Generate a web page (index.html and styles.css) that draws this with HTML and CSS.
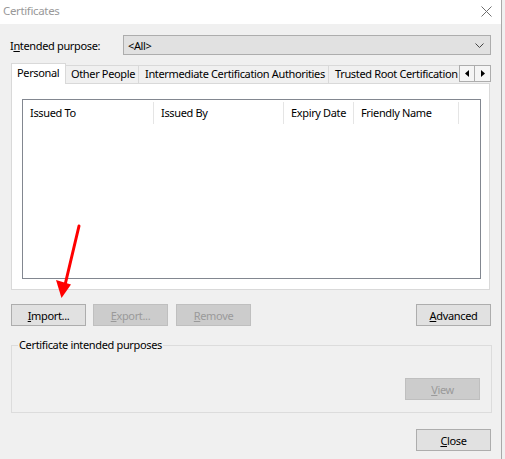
FILE: index.html
```html
<!DOCTYPE html>
<html>
<head>
<meta charset="utf-8">
<link rel="stylesheet" href="styles.css">
</head>
<body>
<div class="window">
  <div class="titlebar">
    <span class="title">Certificates</span>
    <svg class="close-x" width="11" height="11" viewBox="0 0 11 11"><path d="M0.5 0.5 L10.5 10.5 M10.5 0.5 L0.5 10.5" stroke="#6e6e6e" stroke-width="1" fill="none"/></svg>
  </div>
  <div class="content">
    <div class="purpose-row">
      <span class="purpose-label">I<u>n</u>tended purpose:</span>
      <div class="combo">
        <span class="combo-text">&lt;All&gt;</span>
        <svg class="combo-chev" width="9" height="5" viewBox="0 0 9 5"><path d="M0.5 0.5 L4.5 4.5 L8.5 0.5" stroke="#444" stroke-width="1" fill="none"/></svg>
      </div>
    </div>
    <div class="tabs">
      <div class="tab selected">Personal</div>
      <div class="tab t2">Other People</div>
      <div class="tab t3">Intermediate Certification Authorities</div>
      <div class="tab t4">Trusted Root Certification Authorities</div>
      <div class="tab-scroll">
        <div class="scroll-btn"><svg width="4" height="7" viewBox="0 0 4 7"><path d="M4 0 L0 3.5 L4 7 Z" fill="#000"/></svg></div>
        <div class="scroll-btn"><svg width="4" height="7" viewBox="0 0 4 7"><path d="M0 0 L4 3.5 L0 7 Z" fill="#000"/></svg></div>
      </div>
    </div>
    <div class="panel">
      <div class="listview">
        <div class="lv-header">
          <div class="col c1">Issued To</div>
          <div class="col c2">Issued By</div>
          <div class="col c3">Expiry Date</div>
          <div class="col c4">Friendly Name</div>
        </div>
      </div>
    </div>
    <div class="btn-row">
      <div class="btn-left">
        <div class="btn"><u>I</u>mport...</div>
        <div class="btn disabled"><u>E</u>xport...</div>
        <div class="btn disabled"><u>R</u>emove</div>
      </div>
      <div class="btn"><u>A</u>dvanced</div>
    </div>
    <fieldset class="group">
      <legend>Certificate intended purposes</legend>
      <div class="group-body">
        <div class="btn disabled"><u>V</u>iew</div>
      </div>
    </fieldset>
    <div class="footer">
      <div class="btn"><u>C</u>lose</div>
    </div>
  </div>
  <svg class="annot-arrow" width="100" height="100" viewBox="0 0 100 100">
    <line x1="79" y1="7" x2="65" y2="66" stroke="#ff0000" stroke-width="3" stroke-linecap="round"/>
    <polygon points="56,61 71,65.5 61.5,79" fill="#ff0000"/>
  </svg>
</div>
</body>
</html>
```
FILE: styles.css
```css
* { box-sizing: border-box; }
html, body {
  margin: 0;
  padding: 0;
  background: #f0f0f0;
  font-family: "Noto Sans", "Segoe UI", sans-serif;
  font-size: 11px;
  letter-spacing: -0.35px;
  color: #000;
}
.window {
  position: relative;
  width: 502px;
  height: 459px;
  background: #f0f0f0;
  border-right: 1px solid #a9a9a9;
}
.titlebar {
  height: 24px;
  background: #fff;
  display: flex;
  align-items: center;
  justify-content: space-between;
  padding: 0 9px 0 3px;
}
.title {
  color: #999;
  font-size: 11.5px;
  line-height: 1;
  margin-top: -2px;
}
.close-x { margin-top: -2px; }
.content {
  padding: 11px 10px 0 11px;
}
.purpose-row {
  display: flex;
  align-items: center;
  height: 20px;
}
.purpose-label {
  width: 113px;
  margin-left: -1px;
}
.combo {
  flex: 1;
  height: 20px;
  background: #e1e1e1;
  border: 1px solid #adadad;
  display: flex;
  align-items: center;
  justify-content: space-between;
  padding: 0 6px 0 4px;
}
.combo-chev { margin-top: 1px; }
.tabs {
  margin-top: 8px;
  height: 20px;
  display: flex;
  align-items: flex-end;
  position: relative;
  z-index: 1;
}
.tab {
  height: 18px;
  line-height: 16px;
  border-top: 1px solid #d9d9d9;
  border-right: 1px solid #d9d9d9;
  background: #f0f0f0;
  white-space: nowrap;
  overflow: hidden;
  padding-left: 5px;
  flex: none;
}
.tab.selected {
  height: 21px;
  margin-bottom: -1px;
  background: #fff;
  border-left: 1px solid #d9d9d9;
  width: 55px;
  padding-left: 5px;
  line-height: 17px;
}
.t2 { width: 73px; }
.t3 { width: 190px; padding-left: 6px; }
.t4 { width: 130px; border-right: none; padding-left: 6px; }
.tab-scroll {
  display: flex;
  height: 17px;
  margin-bottom: 1px;
  align-self: flex-end;
}
.scroll-btn {
  width: 16px;
  height: 17px;
  border: 1px solid #adadad;
  background: #f5f5f5;
  display: flex;
  align-items: center;
  justify-content: center;
}
.scroll-btn + .scroll-btn { border-left: none; }
.panel {
  width: 479px;
  height: 207px;
  background: #fff;
  border: 1px solid #d9d9d9;
  padding: 15px 0 0 10px;
}
.listview {
  width: 459px;
  height: 180px;
  border: 1px solid #828790;
  background: #fff;
}
.lv-header {
  display: flex;
  height: 24px;
  padding-top: 2px;
}
.col {
  border-right: 1px solid #e5e5e5;
  padding-left: 7px;
  line-height: 22px;
  height: 22px;
  white-space: nowrap;
}
.c1 { width: 131px; }
.c2 { width: 130px; }
.c3 { width: 70px; }
.c4 { width: 105px; }
.btn-row {
  margin-top: 14px;
  display: flex;
  justify-content: space-between;
}
.btn-left { display: flex; gap: 7px; }
.btn-left .btn + .btn.disabled + .btn.disabled { margin-left: 1px; }
.btn {
  width: 75px;
  height: 22px;
  background: #e1e1e1;
  border: 1px solid #adadad;
  display: flex;
  align-items: center;
  justify-content: center;
  line-height: 1;
}
.btn.disabled {
  background: #cccccc;
  border-color: #bfbfbf;
  color: #9a9a9a;
}
.group {
  margin: 12px 0 0 0;
  padding: 0;
  border: 1px solid #dcdcdc;
  height: 75px;
  width: 481px;
}
.group legend {
  margin-left: 6px;
  padding: 0 1px;
  line-height: 14px;
}
.group-body {
  display: flex;
  justify-content: flex-end;
  padding: 26px 11px 0 0;
}
.footer {
  margin-top: 16px;
  display: flex;
  justify-content: flex-end;
}
.annot-arrow {
  position: absolute;
  left: 0;
  top: 219px;
}
```
